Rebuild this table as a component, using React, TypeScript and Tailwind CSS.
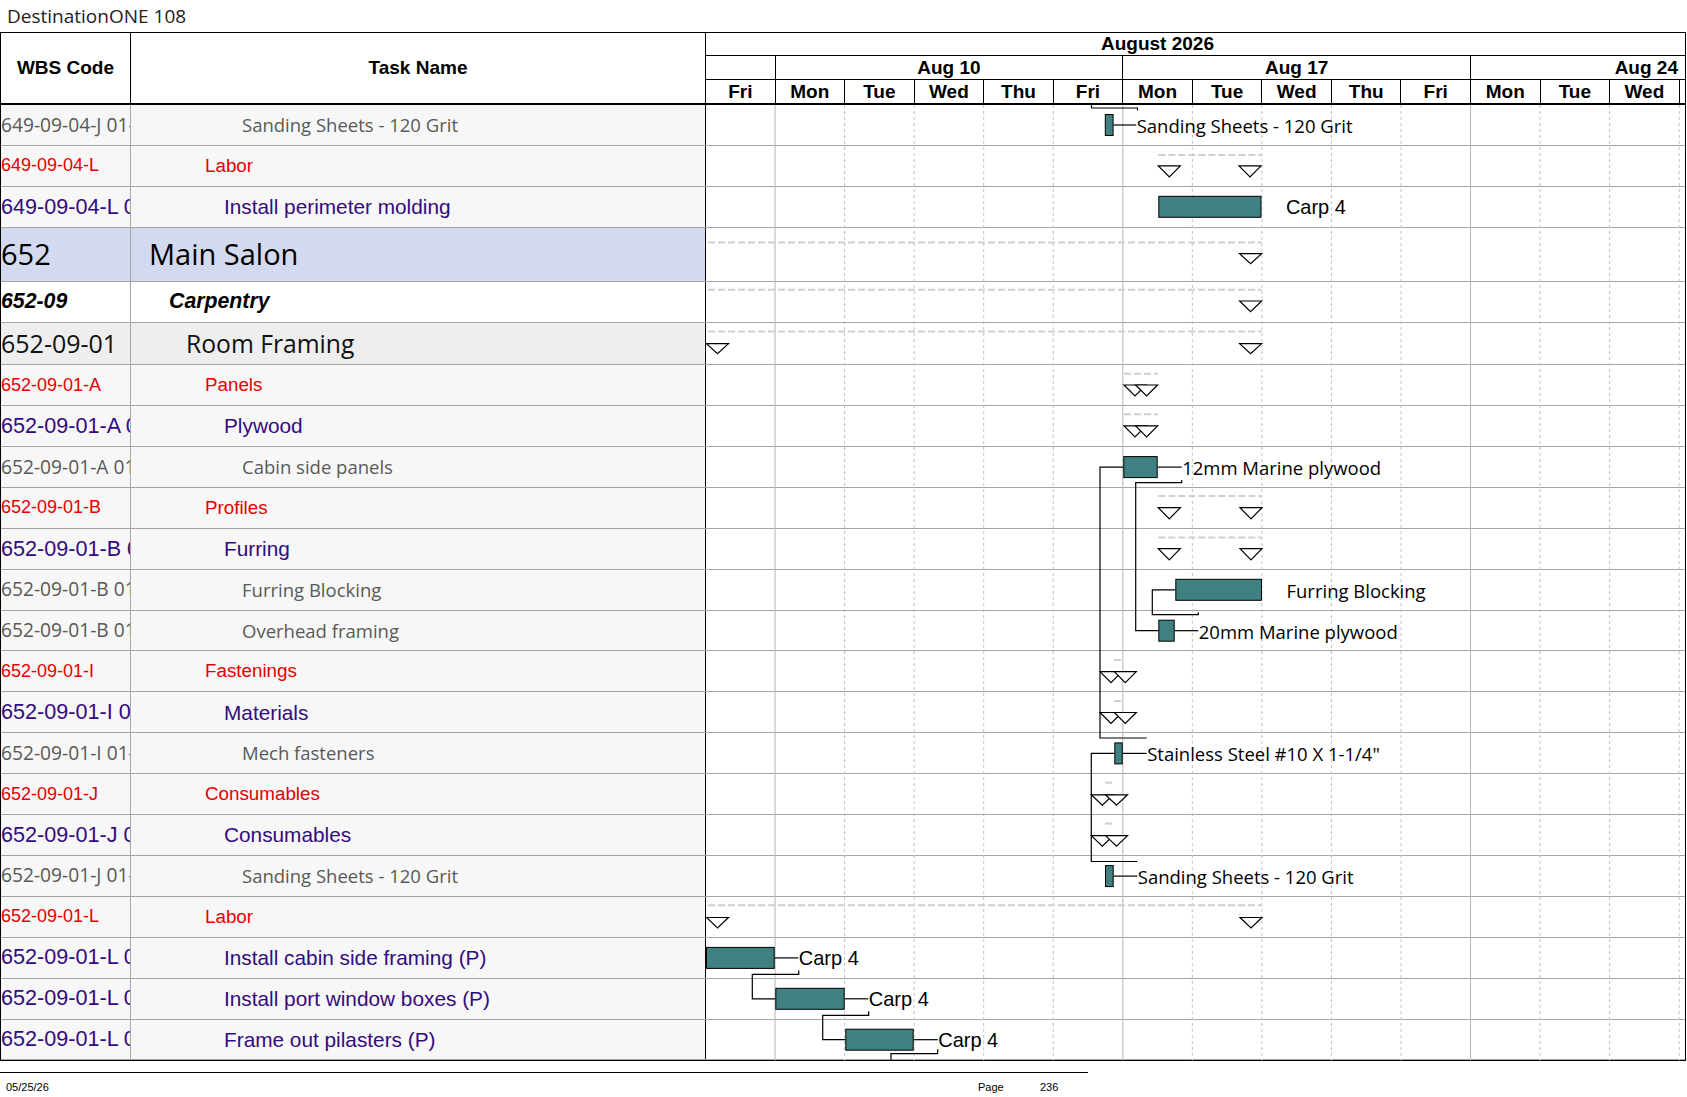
import React from "react"

type Kind = "gray" | "red" | "purple" | "l1" | "l2" | "l3"

const styles: Record<Kind, { bg: string; code: string; task: string }> = {
  gray: {
    bg: "bg-[#f7f7f7]",
    code: "font-['Open_Sans',sans-serif] text-[19.2px] text-[#595959]",
    task: "pl-[111px] font-['Open_Sans',sans-serif] text-[18.5px] text-[#595959]",
  },
  red: {
    bg: "bg-[#f7f7f7]",
    code: "font-['Liberation_Sans',Arial,sans-serif] text-[18px] text-[#e60000]",
    task: "pl-[74px] font-['Liberation_Sans',Arial,sans-serif] text-[18.8px] text-[#e60000]",
  },
  purple: {
    bg: "bg-[#f7f7f7]",
    code: "font-['Liberation_Sans',Arial,sans-serif] text-[21.6px] text-[#330a80]",
    task: "pl-[93px] font-['Liberation_Sans',Arial,sans-serif] text-[20.8px] text-[#330a80]",
  },
  l1: {
    bg: "bg-[#d3d9ef]",
    code: "font-['Open_Sans',sans-serif] text-[29px] text-black",
    task: "pl-[18px] font-['Open_Sans',sans-serif] text-[29px] text-black",
  },
  l2: {
    bg: "bg-white",
    code: "font-['Liberation_Sans',Arial,sans-serif] text-[21.3px] font-bold italic text-black",
    task: "pl-[38px] font-['Liberation_Sans',Arial,sans-serif] text-[21.3px] font-bold italic text-black",
  },
  l3: {
    bg: "bg-[#eeeeee]",
    code: "font-['Open_Sans',sans-serif] text-[25px] text-[#111]",
    task: "pl-[55px] font-['Open_Sans',sans-serif] text-[24.7px] text-[#111]",
  },
}

const rows: { kind: Kind; code: string; name: string; h: number }[] = [
  { kind: "gray", code: "649-09-04-J 01-01", name: "Sanding Sheets - 120 Grit", h: 40.9 },
  { kind: "red", code: "649-09-04-L", name: "Labor", h: 40.9 },
  { kind: "purple", code: "649-09-04-L 01", name: "Install perimeter molding", h: 40.9 },
  { kind: "l1", code: "652", name: "Main Salon", h: 54 },
  { kind: "l2", code: "652-09", name: "Carpentry", h: 40.9 },
  { kind: "l3", code: "652-09-01", name: "Room Framing", h: 42.7 },
  { kind: "red", code: "652-09-01-A", name: "Panels", h: 40.9 },
  { kind: "purple", code: "652-09-01-A 01", name: "Plywood", h: 40.9 },
  { kind: "gray", code: "652-09-01-A 01-01", name: "Cabin side panels", h: 40.9 },
  { kind: "red", code: "652-09-01-B", name: "Profiles", h: 40.9 },
  { kind: "purple", code: "652-09-01-B 01", name: "Furring", h: 40.9 },
  { kind: "gray", code: "652-09-01-B 01-01", name: "Furring Blocking", h: 40.9 },
  { kind: "gray", code: "652-09-01-B 01-02", name: "Overhead framing", h: 40.9 },
  { kind: "red", code: "652-09-01-I", name: "Fastenings", h: 40.9 },
  { kind: "purple", code: "652-09-01-I 01", name: "Materials", h: 40.9 },
  { kind: "gray", code: "652-09-01-I 01-01", name: "Mech fasteners", h: 40.9 },
  { kind: "red", code: "652-09-01-J", name: "Consumables", h: 40.9 },
  { kind: "purple", code: "652-09-01-J 01", name: "Consumables", h: 40.9 },
  { kind: "gray", code: "652-09-01-J 01-01", name: "Sanding Sheets - 120 Grit", h: 40.9 },
  { kind: "red", code: "652-09-01-L", name: "Labor", h: 40.9 },
  { kind: "purple", code: "652-09-01-L 01", name: "Install cabin side framing (P)", h: 40.9 },
  { kind: "purple", code: "652-09-01-L 02", name: "Install port window boxes (P)", h: 40.9 },
  { kind: "purple", code: "652-09-01-L 03", name: "Frame out pilasters (P)", h: 40.9 },
]

const rowH: Record<number, string> = {
  40.9: "h-[40.9px]",
  54: "h-[54px]",
  42.7: "h-[42.7px]",
}

// row tops inside the chart body
const tops: number[] = []
let acc = 0
for (const r of rows) {
  tops.push(acc)
  acc += r.h
}
const bodyH = acc
const Y = (r: number, off: number) => tops[r - 1] + off

const DAY = 69.55
const GX = 706
const days = ["Fri", "Mon", "Tue", "Wed", "Thu", "Fri", "Mon", "Tue", "Wed", "Thu", "Fri", "Mon", "Tue", "Wed"]

const summaries = [
  { r: 2, dy: 9, x1: 1158.3, x2: 1261, tris: [1158.3, 1239], ty: 20, tb: 31 },
  { r: 4, dy: 14.7, x1: 708, x2: 1261.6, tris: [1239.6], ty: 26, tb: 36 },
  { r: 5, dy: 8, x1: 708, x2: 1261.6, tris: [1239.6], ty: 19.3, tb: 30 },
  { r: 6, dy: 9, x1: 708, x2: 1261.6, tris: [706.5, 1239.6], ty: 21, tb: 31 },
  { r: 7, dy: 8.4, x1: 1124, x2: 1157.6, tris: [1124, 1135.6], ty: 19.7, tb: 30.7 },
  { r: 8, dy: 8, x1: 1124, x2: 1157.6, tris: [1124, 1135.6], ty: 19.7, tb: 30.7 },
  { r: 10, dy: 8, x1: 1158.3, x2: 1262, tris: [1158.3, 1240], ty: 19.7, tb: 31 },
  { r: 11, dy: 8.5, x1: 1158.3, x2: 1262, tris: [1158.3, 1240], ty: 19.7, tb: 31 },
  { r: 14, dy: 8.5, x1: 1114, x2: 1122, tris: [1100, 1114.3], ty: 20, tb: 31 },
  { r: 15, dy: 8.5, x1: 1114, x2: 1122, tris: [1100, 1114.3], ty: 20, tb: 31 },
  { r: 17, dy: 8.4, x1: 1105, x2: 1112, tris: [1091.3, 1105.5], ty: 20.5, tb: 31 },
  { r: 18, dy: 8.4, x1: 1105, x2: 1112, tris: [1091.3, 1105.5], ty: 20.5, tb: 31 },
  { r: 20, dy: 8.3, x1: 708, x2: 1262, tris: [706.5, 1240], ty: 20.5, tb: 31 },
]

const bars = [
  { r: 1, x1: 1104.8, x2: 1113.6, label: "Sanding Sheets - 120 Grit", lx: 1136.2, line: true, arial: false },
  { r: 3, x1: 1158.3, x2: 1261.5, label: "Carp 4", lx: 1285.4, line: false, arial: true },
  { r: 9, x1: 1123.3, x2: 1157.7, label: "12mm Marine plywood", lx: 1181.7, line: true, arial: false },
  { r: 12, x1: 1175.3, x2: 1262, label: "Furring Blocking", lx: 1286, line: false, arial: false },
  { r: 13, x1: 1158.3, x2: 1174.7, label: "20mm Marine plywood", lx: 1198.3, line: true, arial: false },
  { r: 16, x1: 1114.3, x2: 1122.7, label: 'Stainless Steel #10 X 1-1/4"', lx: 1146.7, line: true, arial: false },
  { r: 19, x1: 1105, x2: 1113.7, label: "Sanding Sheets - 120 Grit", lx: 1137.3, line: true, arial: false },
  { r: 21, x1: 706, x2: 774.7, label: "Carp 4", lx: 798.3, line: true, arial: true },
  { r: 22, x1: 775.3, x2: 844.7, label: "Carp 4", lx: 868.3, line: true, arial: true },
  { r: 23, x1: 845.3, x2: 913.7, label: "Carp 4", lx: 937.7, line: true, arial: true },
]

const links: number[][][] = [
  [[1091.5, Y(1, 0)], [1091.5, Y(1, 3)], [1137.5, Y(1, 3)], [1137.5, Y(1, 5.5)]],
  [[1181.7, Y(9, 33)], [1181.7, Y(9, 35.5)], [1135.7, Y(9, 35.5)], [1135.7, Y(13, 20)], [1158.3, Y(13, 20)]],
  [[1146.7, Y(16, 4.6)], [1100, Y(16, 4.6)], [1100, Y(9, 20)], [1123.3, Y(9, 20)]],
  [[1137.3, Y(19, 5.4)], [1091.3, Y(19, 5.4)], [1091.3, Y(16, 20)], [1114.3, Y(16, 20)]],
  [[1198.3, Y(13, 1.5)], [1198.3, Y(13, 4)], [1152.3, Y(13, 4)], [1152.3, Y(12, 20)], [1175.3, Y(12, 20)]],
  [[798.7, Y(21, 32.5)], [798.7, Y(21, 36.5)], [752.3, Y(21, 36.5)], [752.3, Y(22, 20)], [775.3, Y(22, 20)]],
  [[868.7, Y(22, 32.5)], [868.7, Y(22, 36.5)], [822.7, Y(22, 36.5)], [822.7, Y(23, 20)], [845.3, Y(23, 20)]],
  [[937.7, Y(23, 29.5)], [937.7, Y(23, 34)], [891, Y(23, 34)], [891, Y(23, 41)]],
]

function GanttChart() {
  return (
    <svg
      className="absolute top-0 left-[705px]"
      width={979}
      height={bodyH}
      viewBox={`${GX} 0 979 ${bodyH}`}
    >
      {/* day grid */}
      {Array.from({ length: 14 }, (_, i) => {
        const k = i + 1
        const x = GX + DAY * k - 0.5
        const monday = k === 1 || k === 6 || k === 11
        return (
          <line
            key={k}
            x1={x}
            x2={x}
            y1={0}
            y2={bodyH}
            stroke={monday ? "#b5b5b5" : "#c2c2c2"}
            strokeWidth={1}
            strokeDasharray={monday ? undefined : "3 3"}
          />
        )
      })}

      {/* summary bars */}
      {summaries.map((s, i) => (
        <g key={i}>
          <line
            x1={s.x1}
            x2={s.x2}
            y1={Y(s.r, s.dy)}
            y2={Y(s.r, s.dy)}
            stroke="#cfcfcf"
            strokeWidth={2}
            strokeDasharray="7 3"
          />
          {s.tris.map((tx, j) => (
            <polygon
              key={j}
              points={`${tx},${Y(s.r, s.ty)} ${tx + 22},${Y(s.r, s.ty)} ${tx + 11},${Y(s.r, s.tb)}`}
              fill="#fff"
              stroke="#000"
              strokeWidth={1.2}
            />
          ))}
        </g>
      ))}

      {/* links */}
      {links.map((pts, i) => (
        <polyline
          key={i}
          points={pts.map((p) => `${p[0]},${p[1]}`).join(" ")}
          fill="none"
          stroke="#000"
          strokeWidth={1.2}
        />
      ))}

      {/* task bars */}
      {bars.map((b, i) => (
        <g key={i}>
          {b.line && (
            <line x1={b.x2} x2={b.lx} y1={Y(b.r, 20)} y2={Y(b.r, 20)} stroke="#000" strokeWidth={1.2} />
          )}
          <rect
            x={b.x1 + 0.5}
            y={Y(b.r, 9.5)}
            width={b.x2 - b.x1 - 1}
            height={21}
            fill="#3f8080"
            stroke="#000"
            strokeWidth={1}
          />
          <text
            x={b.lx + 0.5}
            y={Y(b.r, 20.5)}
            dominantBaseline="central"
            fill="#000"
            className={
              b.arial
                ? "font-['Liberation_Sans',Arial,sans-serif] text-[20px]"
                : "font-['Open_Sans',sans-serif] text-[18.5px]"
            }
          >
            {b.label}
          </text>
        </g>
      ))}
    </svg>
  )
}

export default function App() {
  return (
    <div className="w-[1687px] min-h-[1097px] bg-white text-black">
      <div className="h-[32px] pl-[7px] flex items-center font-['Open_Sans',sans-serif] text-[19px] text-[#222]">
        DestinationONE 108
      </div>

      <div className="w-[1686px] border border-black">
        {/* header */}
        <div className="flex h-[72px] border-b-2 border-black">
          <div className="w-[130px] shrink-0 border-r border-black flex items-center justify-center font-['Liberation_Sans',Arial,sans-serif] text-[19px] font-bold">
            WBS Code
          </div>
          <div className="w-[575px] shrink-0 border-r border-black flex items-center justify-center font-['Liberation_Sans',Arial,sans-serif] text-[19px] font-bold">
            Task Name
          </div>
          <div className="flex-1 flex flex-col font-['Liberation_Sans',Arial,sans-serif] text-[19px] font-bold">
            <div className="h-[23px] border-b border-black flex items-center pb-[2px]">
              <div className="w-[903px] text-center leading-none">August 2026</div>
            </div>
            <div className="h-[24px] border-b border-black grid grid-cols-[repeat(14,69.55px)_1fr]">
              <div className="border-r border-black" />
              <div className="col-span-5 border-r border-black flex items-center justify-center leading-none">Aug 10</div>
              <div className="col-span-5 border-r border-black flex items-center justify-center leading-none">Aug 17</div>
              <div className="col-span-4 flex items-center justify-end pr-[7px] leading-none">Aug 24</div>
            </div>
            <div className="flex-1 grid grid-cols-[repeat(14,69.55px)_1fr]">
              {days.map((d, i) => (
                <div key={i} className="border-r border-black flex items-center justify-center leading-none">
                  {d}
                </div>
              ))}
              <div />
            </div>
          </div>
        </div>

        {/* body */}
        <div className="relative">
          {rows.map((r, i) => {
            const s = styles[r.kind]
            return (
              <div key={i} className={`flex border-b border-[#a6a6a6] ${rowH[r.h]}`}>
                <div className={`w-[130px] shrink-0 border-r border-[#a6a6a6] flex items-center overflow-hidden whitespace-nowrap ${s.bg} ${s.code}`}>
                  {r.code}
                </div>
                <div className={`w-[575px] shrink-0 border-r border-black flex items-center overflow-hidden whitespace-nowrap ${s.bg} ${s.task}`}>
                  {r.name}
                </div>
                <div className="flex-1 bg-white" />
              </div>
            )
          })}
          <GanttChart />
        </div>
      </div>

      {/* footer */}
      <div className="mt-[11px] w-[1088px] border-t border-black flex pt-[6px] font-['Liberation_Sans',Arial,sans-serif] text-[11px] text-black">
        <span className="w-[978px] pl-[6px]">05/25/26</span>
        <span className="w-[62px]">Page</span>
        <span>236</span>
      </div>
    </div>
  )
}
